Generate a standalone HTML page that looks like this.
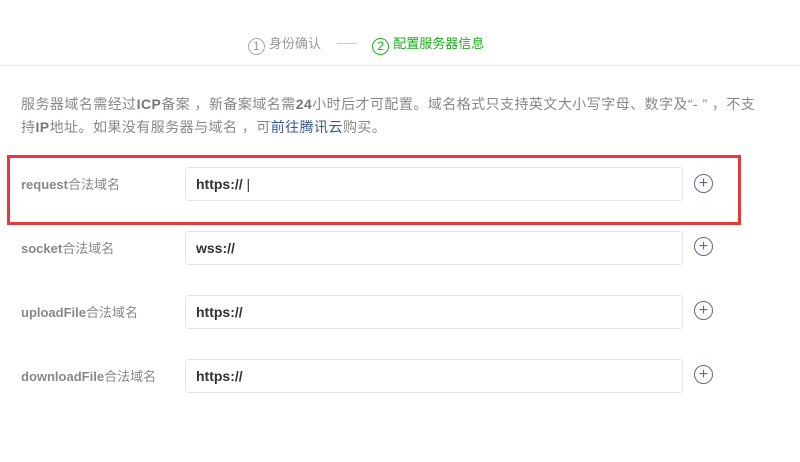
<!DOCTYPE html>
<html><head><meta charset="utf-8"><style>
body{margin:0;width:800px;height:462px;background:#fff;font-family:"Liberation Sans","Noto Sans CJK SC",sans-serif;position:relative;overflow:hidden}
.a{position:absolute}
.steps{top:33px;left:248px;font-size:13px;color:#999;white-space:nowrap}
.c{display:inline-block;width:15px;height:15px;border:1.5px solid #aaa;border-radius:50%;text-align:center;line-height:15px;font-size:12px;vertical-align:-2px;margin-right:4px}
.g{color:#1aad19}.g .c{border-color:#1aad19}
.hr{top:65px;left:0;width:800px;height:1px;background:#e7e7e7}
.p{top:93px;left:21px;width:770px;font-size:14px;line-height:23px;color:#888;white-space:nowrap;letter-spacing:0.45px}
.p b{color:#777}
.red{top:155px;left:7px;width:728px;height:64px;border:3px solid #e8383d}
.lbl{left:21px;font-size:13px;color:#888}
.lbl b{color:#888}
.in{left:185px;width:486px;height:32px;border:1px solid #e5e5e5;border-radius:3px;font-size:14px;font-weight:bold;color:#333;line-height:32px;padding-left:10px}
.plus{left:694px;width:17px;height:17px;border:1.5px solid #5f6a8a;border-radius:50%;color:#5f6a8a;text-align:center;line-height:17px;font-size:16px}
</style></head><body>
<div class="a steps"><span class="c">1</span>身份确认 <span style="display:inline-block;width:20px;height:1px;background:#ccc;vertical-align:4px;margin:0 12px"></span> <span class="g"><span class="c">2</span>配置服务器信息</span></div>
<div class="a hr"></div>
<div class="a p">服务器域名需经过<b>ICP</b>备案 ，新备案域名需<b>24</b>小时后才可配置。域名格式只支持英文大小写字母、数字及“- ” ，不支<br>持<b>IP</b>地址。如果没有服务器与域名 ，可<span style="color:#3b5998">前往腾讯云</span>购买。</div>
<div class="a red"></div>
<div class="a lbl" style="top:174px"><b>request</b>合法域名</div>
<div class="a in" style="top:167px">https:// <span style="font-weight:normal">|</span></div>
<div class="a plus" style="top:174px">+</div>
<div class="a lbl" style="top:238px"><b>socket</b>合法域名</div>
<div class="a in" style="top:231px">wss://</div>
<div class="a plus" style="top:237px">+</div>
<div class="a lbl" style="top:302px"><b>uploadFile</b>合法域名</div>
<div class="a in" style="top:295px">https://</div>
<div class="a plus" style="top:301px">+</div>
<div class="a lbl" style="top:366px"><b>downloadFile</b>合法域名</div>
<div class="a in" style="top:359px">https://</div>
<div class="a plus" style="top:365px">+</div>
</body></html>
